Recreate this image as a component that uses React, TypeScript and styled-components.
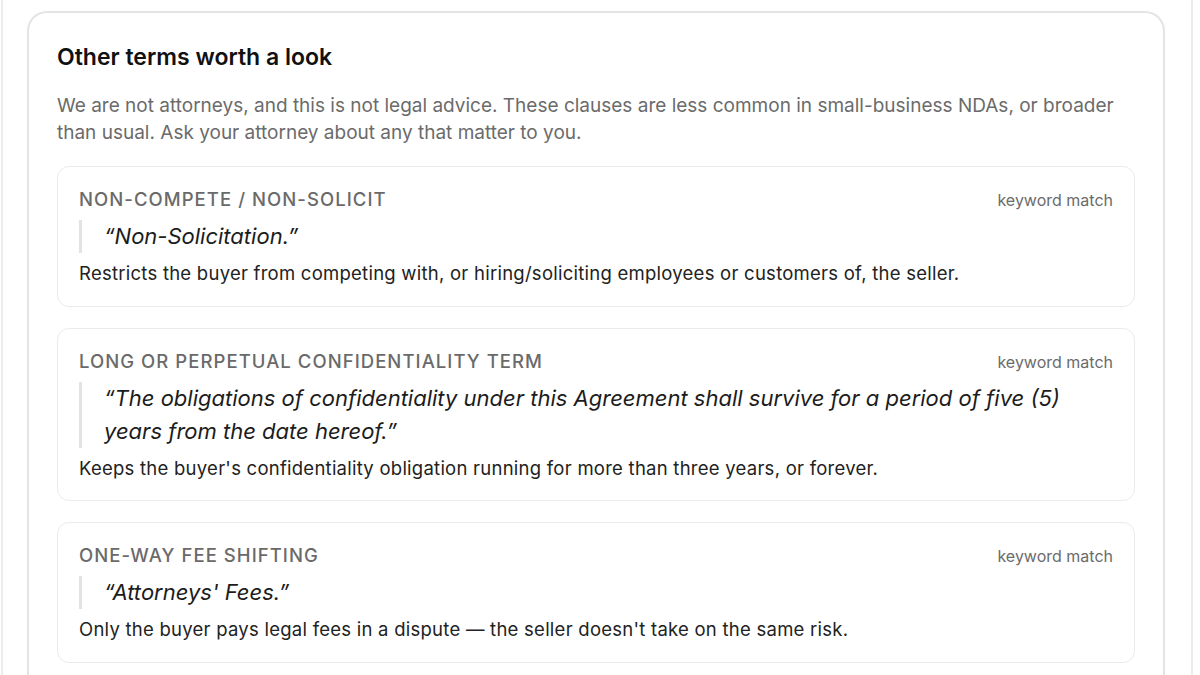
import styled, { createGlobalStyle } from "styled-components";

const GlobalStyle = createGlobalStyle`
  html, body {
    margin: 0;
    padding: 0;
    background: #ffffff;
  }
  body {
    font-family: Inter, "Liberation Sans", sans-serif;
    color: #1a1a1a;
    -webkit-font-smoothing: antialiased;
  }
`;

const Frame = styled.div`
  width: 1192px;
  box-sizing: border-box;
  min-height: 675px;
  border-left: 2px solid #ececec;
  border-right: 2px solid #ececec;
  margin-left: 1px;
  padding: 11px 26px 0 24px;
`;

const Panel = styled.section`
  border: 2px solid #e4e4e4;
  border-bottom: none;
  border-radius: 20px 20px 0 0;
  padding: 30px 28px 20px 28px;
  background: #fff;
`;

const Title = styled.h2`
  margin: 0;
  font-size: 23px;
  line-height: 28px;
  font-weight: 600;
  color: #111;
`;

const Intro = styled.p`
  margin: 21px 0 20px;
  font-size: 19px;
  line-height: 27px;
  color: #6b6b6b;
`;

const List = styled.div`
  display: flex;
  flex-direction: column;
  gap: 21px;
  width: 1078px;
`;

const Term = styled.article`
  border: 1.5px solid #ebebeb;
  border-radius: 12px;
  padding: 20px 21px 19.5px;
  background: #fff;
`;

const TermHead = styled.div`
  display: flex;
  justify-content: space-between;
  align-items: baseline;
`;

const Label = styled.div`
  font-size: 18.5px;
  line-height: 24px;
  font-weight: 500;
  color: #6a6a6a;
  text-transform: uppercase;
  letter-spacing: 1.05px;
`;

const Tag = styled.span`
  font-size: 16px;
  color: #6b6b6b;
`;

const Quote = styled.blockquote`
  margin: 9px 0 7px;
  border-left: 3px solid #e3e3e3;
  padding-left: 22px;
  font-style: italic;
  font-size: 22px;
  line-height: 33px;
  color: #1c1c1c;
`;

const Summary = styled.p`
  margin: 0;
  font-size: 18.5px;
  line-height: 26px;
  letter-spacing: 0.25px;
  color: #222;
`;

type TermData = {
  label: string;
  quote: string;
  summary: string;
};

const terms: TermData[] = [
  {
    label: "Non-compete / non-solicit",
    quote: "Non-Solicitation.",
    summary:
      "Restricts the buyer from competing with, or hiring/soliciting employees or customers of, the seller.",
  },
  {
    label: "Long or perpetual confidentiality term",
    quote:
      "The obligations of confidentiality under this Agreement shall survive for a period of five (5) years from the date hereof.",
    summary:
      "Keeps the buyer's confidentiality obligation running for more than three years, or forever.",
  },
  {
    label: "One-way fee shifting",
    quote: "Attorneys' Fees.",
    summary:
      "Only the buyer pays legal fees in a dispute \u2014 the seller doesn't take on the same risk.",
  },
];

const TermCard = ({ label, quote, summary }: TermData) => (
  <Term>
    <TermHead>
      <Label>{label}</Label>
      <Tag>keyword match</Tag>
    </TermHead>
    <Quote>{"\u201C" + quote + "\u201D"}</Quote>
    <Summary>{summary}</Summary>
  </Term>
);

export default function App() {
  return (
    <>
      <GlobalStyle />
      <Frame>
        <Panel>
          <Title>Other terms worth a look</Title>
          <Intro>
            We are not attorneys, and this is not legal advice. These clauses are less
            common in small-business NDAs, or broader than usual. Ask your attorney about
            any that matter to you.
          </Intro>
          <List>
            {terms.map((t) => (
              <TermCard key={t.label} {...t} />
            ))}
          </List>
        </Panel>
      </Frame>
    </>
  );
}
